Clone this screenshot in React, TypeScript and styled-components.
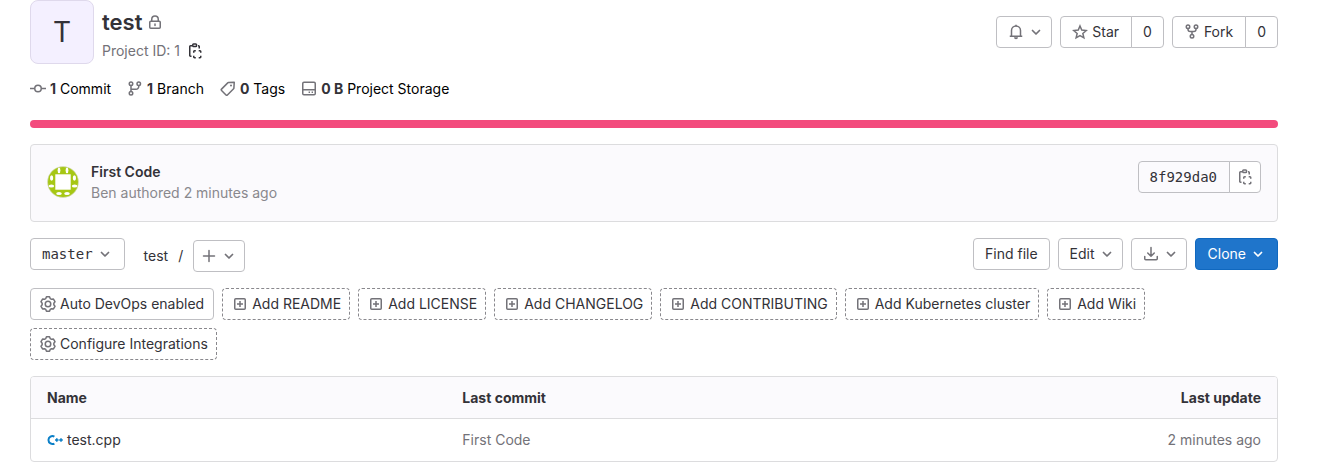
import React from "react";
import styled, { createGlobalStyle, css } from "styled-components";

const GlobalStyle = createGlobalStyle`
  *, *::before, *::after { box-sizing: border-box; }
  body {
    margin: 0;
    background: #fff;
    color: #333238;
    font-family: Inter, "Noto Sans", sans-serif;
    font-size: 14px;
    line-height: 20px;
  }
  a { color: inherit; text-decoration: none; }
  button { font: inherit; color: inherit; cursor: pointer; }
`;

/* ---------- icons ---------- */

const Svg = styled.svg<{ $color?: string }>`
  flex: none;
  display: block;
  width: 16px;
  height: 16px;
  color: ${(p) => p.$color ?? "#737278"};
  fill: none;
  stroke: currentColor;
  stroke-width: 1.5;
`;

const shapes = {
  chevron: <path d="M4.5 6.5 8 10l3.5-3.5" strokeWidth="1.7" strokeLinecap="round" strokeLinejoin="round" />,
  lock: (
    <>
      <path d="M4.75 7.5V5.25a3.25 3.25 0 0 1 6.5 0V7.5" />
      <rect x="2.75" y="7.25" width="10.5" height="7" rx="1" />
      <path d="M8 10v1.5" strokeLinecap="round" />
    </>
  ),
  copy: (
    <>
      <path d="M5 2.75H3.5a.75.75 0 0 0-.75.75v9a.75.75 0 0 0 .75.75h1M11 2.75h.5a.75.75 0 0 1 .75.75v2" />
      <rect x="5.75" y=".95" width="3.8" height="2.6" rx=".8" />
      <path d="M6.75 9.8V8.5a.75.75 0 0 1 .75-.75h1.3M11.7 7.75H13a.75.75 0 0 1 .75.75v1.3M13.75 12.7V14a.75.75 0 0 1-.75.75h-1.3M8.8 14.75H7.5a.75.75 0 0 1-.75-.75v-1.3" />
    </>
  ),
  commit: (
    <>
      <circle cx="8" cy="7.5" r="3.25" />
      <path d="M0 7.5h4.75M11.25 7.5H16" />
    </>
  ),
  branch: (
    <>
      <circle cx="4" cy="2.75" r="1.75" />
      <circle cx="4" cy="12.25" r="1.75" />
      <circle cx="11.75" cy="2.75" r="1.75" />
      <path d="M4 4.5v6M4 8.25H9A2.75 2.75 0 0 0 11.75 5.5v-1" />
    </>
  ),
  fork: (
    <>
      <circle cx="4" cy="2.75" r="1.75" />
      <circle cx="12" cy="2.75" r="1.75" />
      <circle cx="8" cy="12.25" r="1.75" />
      <path d="M4 4.5V5.2A2.25 2.25 0 0 0 6.25 7.45h3.5A2.25 2.25 0 0 0 12 5.2v-.7M8 7.45v3" />
    </>
  ),
  tag: (
    <>
      <path d="M8.4 1.6 14.25 1.25l-.35 5.85a1 1 0 0 1-.3.65l-6.2 6.2a1 1 0 0 1-1.4 0L1.55 9.5a1 1 0 0 1 0-1.4l6.2-6.2a1 1 0 0 1 .65-.3z" strokeLinejoin="round" />
      <circle cx="11" cy="4.6" r="1" fill="currentColor" stroke="none" />
    </>
  ),
  disk: (
    <>
      <rect x="1.75" y="1.25" width="12.5" height="12.5" rx="1.25" />
      <path d="M2 8.75h12" />
      <path d="M7.6 11.25h1.4M10.6 11.25H12" />
    </>
  ),
  bell: (
    <>
      <path d="M3.5 12V6.5a4.5 4.5 0 0 1 9 0V12M1.75 12.25h12.5" />
      <path d="M8 .75v1.5" />
      <path d="M6 13.25a2 2 0 0 0 4 0z" fill="currentColor" stroke="none" />
    </>
  ),
  star: (
    <path d="m8 2 1.75 4.1 4.5.4-3.4 2.95 1 4.35L8 11.5l-3.85 2.3 1-4.35L1.75 6.5l4.5-.4z" />
  ),
  plus: <path d="M8 2.5v11M2.5 8h11" strokeLinecap="round" />,
  plusSquare: (
    <>
      <rect x="2.75" y="2.75" width="10.5" height="10.5" rx="1" />
      <path d="M8 5v6M5 8h6" />
    </>
  ),
  download: (
    <path d="M8 1.5v8.75M4.75 7 8 10.25 11.25 7M1.75 10.5v2.25a1 1 0 0 0 1 1h10.5a1 1 0 0 0 1-1V10.5" strokeLinejoin="round" strokeLinecap="round" />
  ),
  gear: (
    <>
      <path
        d="M6.46.8H9.54L10.21 2.53 11.63 3.35 13.46 3.08 14.99 5.73 13.84 7.18V8.82L14.99 10.27 13.46 12.92 11.63 12.65 10.21 13.47 9.54 15.2H6.46L5.79 13.47 4.37 12.65 2.54 12.92 1.01 10.27 2.16 8.82V7.18L1.01 5.73 2.54 3.08 4.37 3.35 5.79 2.53z"
        strokeLinejoin="round"
      />
      <circle cx="8" cy="8" r="2.75" />
    </>
  ),
};

type IconName = keyof typeof shapes;

const Icon = ({ name, color }: { name: IconName; color?: string }) => (
  <Svg viewBox="0 0 16 16" $color={color} aria-hidden="true">
    {shapes[name]}
  </Svg>
);

const CppIcon = () => (
  <Svg viewBox="0 0 16 16" $color="#0a7fc7" aria-hidden="true">
    <path d="M7.4 4.5A4 4 0 1 0 7.4 11.5" strokeWidth="2" />
    <path d="M8 8h3.6M9.8 6.200v3.600M12.200 8h3.600M14 6.200v3.600" strokeWidth="1.5" />
  </Svg>
);

const IdenticonSvg = styled.svg`
  flex: none;
  display: block;
  width: 32px;
  height: 32px;
`;

const Identicon = () => (
  <IdenticonSvg viewBox="0 0 32 32" role="img" aria-label="Ben">
    <circle cx="16" cy="16" r="15.5" fill="#a6c714" stroke="#dcdcde" strokeWidth=".5" />
    <g fill="#fff">
      <rect x="8.3" y="8.3" width="15.4" height="15.4" />
      <ellipse cx="12" cy="4.4" rx="1.4" ry="2.8" />
      <ellipse cx="20" cy="4.4" rx="1.4" ry="2.8" />
      <ellipse cx="4.6" cy="12" rx="1.6" ry="2.8" />
      <ellipse cx="27.4" cy="12" rx="1.6" ry="2.8" />
      <ellipse cx="4.4" cy="20" rx="2.8" ry="1.5" />
      <ellipse cx="27.6" cy="20" rx="2.8" ry="1.5" />
      <ellipse cx="12" cy="27.6" rx="2.8" ry="1.5" />
      <ellipse cx="20" cy="27.6" rx="2.8" ry="1.5" />
    </g>
  </IdenticonSvg>
);

/* ---------- layout ---------- */

const Page = styled.main`
  padding: 0 40px 12px 30px;
`;

const Header = styled.header`
  display: flex;
  justify-content: space-between;
  align-items: center;
`;

const Project = styled.div`
  display: flex;
  gap: 8px;
`;

const Avatar = styled.div`
  display: grid;
  place-items: center;
  width: 64px;
  height: 64px;
  border: 1px solid #dfd9ec;
  border-radius: 8px;
  background: #f4f0ff;
  font-size: 28px;
  line-height: 32px;
`;

const TitleRow = styled.div`
  display: flex;
  align-items: center;
  gap: 5px;
  padding: 8px 0 5px;
`;

const Title = styled.h1`
  margin: 0;
  font-size: 22px;
  line-height: 28px;
  font-weight: 600;
`;

const ProjectId = styled.div`
  display: flex;
  align-items: center;
  gap: 7px;
  color: #737278;
`;

const IconButton = styled.button`
  padding: 0;
  border: 0;
  background: none;
`;

const Row = styled.div`
  display: flex;
  gap: 8px;
`;

const buttonLook = css`
  display: inline-flex;
  align-items: center;
  gap: 4px;
  height: 32px;
  border: 1px solid #bfbfc3;
  border-radius: 4px;
  background: #fff;
  white-space: nowrap;
`;

const Button = styled.button<{ $primary?: boolean; $mono?: boolean; $pad?: string }>`
  ${buttonLook}
  padding: 0 ${(p) => p.$pad ?? "11px"};
  ${(p) => p.$mono && css`font-family: "DejaVu Sans Mono", monospace;`}
  ${(p) =>
    p.$primary &&
    css`
      padding-left: 12px;
      border-color: #1068bf;
      background: #1f75cb;
      color: #fff;
    `}
`;

const ButtonGroup = styled.div`
  display: flex;

  > * + * {
    margin-left: -1px;
  }
  > :first-child {
    padding-right: 12px;
    border-top-right-radius: 0;
    border-bottom-right-radius: 0;
  }
  > :last-child {
    border-top-left-radius: 0;
    border-bottom-left-radius: 0;
  }
`;

const CountLink = styled.a`
  ${buttonLook}
  padding: 0 11px;
`;

const Sha = styled.span`
  ${buttonLook}
  padding: 0 11px;
  background: transparent;
  font-family: "DejaVu Sans Mono", monospace;
`;

const Stats = styled.nav`
  display: flex;
  gap: 16px;
  padding: 15px 0 21px;
  color: #000;
`;

const Stat = styled.a`
  display: flex;
  align-items: center;
  gap: 4px;

  strong {
    font-weight: 700;
    color: #333238;
  }
`;

const LanguageBar = styled.div`
  height: 8px;
  border-radius: 4px;
  background: #f34b7d;
`;

const CommitCard = styled.section`
  display: flex;
  justify-content: space-between;
  align-items: flex-start;
  margin: 16px 0;
  padding: 16px;
  min-height: 78px;
  border: 1px solid #dcdcde;
  border-radius: 4px;
  background: #fbfafd;
`;

const CommitInfo = styled.div`
  display: flex;
  align-items: center;
  gap: 12px;
  color: #89888d;
  line-height: 21px;
`;

const CommitTitle = styled.a`
  display: block;
  font-weight: 600;
  color: #333238;
`;

const Toolbar = styled.div`
  display: flex;
  justify-content: space-between;
  align-items: flex-start;
`;

const Crumbs = styled.nav`
  display: flex;
  align-items: center;
  gap: 10px;
  padding: 2px 0 0 11px;
`;

const Chips = styled.div`
  display: flex;
  flex-wrap: wrap;
  gap: 8px;
  margin: 16px 0;
`;

const Chip = styled.a<{ $solid?: boolean }>`
  ${buttonLook}
  padding: 0 9px;
  ${(p) =>
    !p.$solid &&
    css`
      padding-right: 8px;
      border: 1px dashed #89888d;
    `}
`;

const TableFrame = styled.div`
  border: 1px solid #dcdcde;
  border-radius: 4px;
  overflow: hidden;
`;

const Table = styled.table`
  width: 100%;
  table-layout: fixed;
  border-collapse: separate;
  border-spacing: 0;

  th,
  td {
    height: 42px;
    padding: 0 16px;
    text-align: left;
  }
  th {
    background: #fbfafd;
    border-bottom: 1px solid #dcdcde;
    font-weight: 700;
  }
  td {
    color: #737278;
  }
  th:last-child,
  td:last-child {
    text-align: right;
  }
`;

const FileLink = styled.a`
  display: flex;
  align-items: center;
  gap: 4px;
  color: #333238;
`;

/* ---------- content ---------- */

const stats: { icon: IconName; value: string; label: string }[] = [
  { icon: "commit", value: "1", label: "Commit" },
  { icon: "branch", value: "1", label: "Branch" },
  { icon: "tag", value: "0", label: "Tags" },
  { icon: "disk", value: "0 B", label: "Project Storage" },
];

const chips: { icon: IconName; label: string; solid?: boolean }[] = [
  { icon: "gear", label: "Auto DevOps enabled", solid: true },
  { icon: "plusSquare", label: "Add README" },
  { icon: "plusSquare", label: "Add LICENSE" },
  { icon: "plusSquare", label: "Add CHANGELOG" },
  { icon: "plusSquare", label: "Add CONTRIBUTING" },
  { icon: "plusSquare", label: "Add Kubernetes cluster" },
  { icon: "plusSquare", label: "Add Wiki" },
  { icon: "gear", label: "Configure Integrations" },
];

export default function App() {
  return (
    <>
      <GlobalStyle />
      <Page>
        <Header>
          <Project>
            <Avatar>T</Avatar>
            <div>
              <TitleRow>
                <Title>test</Title>
                <Icon name="lock" />
              </TitleRow>
              <ProjectId>
                Project ID: 1
                <IconButton aria-label="Copy project ID">
                  <Icon name="copy" color="#333238" />
                </IconButton>
              </ProjectId>
            </div>
          </Project>
          <Row>
            <Button $pad="7px 0 11px" aria-label="Notifications">
              <Icon name="bell" />
              <Icon name="chevron" />
            </Button>
            <ButtonGroup>
              <Button>
                <Icon name="star" />
                Star
              </Button>
              <CountLink href="#stars">0</CountLink>
            </ButtonGroup>
            <ButtonGroup>
              <Button>
                <Icon name="fork" />
                Fork
              </Button>
              <CountLink href="#forks">0</CountLink>
            </ButtonGroup>
          </Row>
        </Header>

        <Stats aria-label="Project statistics">
          {stats.map((s) => (
            <Stat key={s.label} href="#stats">
              <Icon name={s.icon} />
              <span>
                <strong>{s.value}</strong> {s.label}
              </span>
            </Stat>
          ))}
        </Stats>

        <LanguageBar />

        <CommitCard>
          <CommitInfo>
            <Identicon />
            <div>
              <CommitTitle href="#commit">First Code</CommitTitle>
              Ben authored 2 minutes ago
            </div>
          </CommitInfo>
          <ButtonGroup>
            <Sha>8f929da0</Sha>
            <Button $pad="7px" aria-label="Copy commit SHA">
              <Icon name="copy" />
            </Button>
          </ButtonGroup>
        </CommitCard>

        <Toolbar>
          <Row>
            <Button $mono>
              master
              <Icon name="chevron" />
            </Button>
            <Crumbs aria-label="Path">
              <a href="#root">test</a>
              <span>/</span>
              <Button $pad="7px" aria-label="Add to tree">
                <Icon name="plus" />
                <Icon name="chevron" />
              </Button>
            </Crumbs>
          </Row>
          <Row>
            <Button>Find file</Button>
            <Button $pad="7px 0 11px">
              Edit
              <Icon name="chevron" />
            </Button>
            <Button $pad="7px 0 11px" aria-label="Download">
              <Icon name="download" />
              <Icon name="chevron" />
            </Button>
            <Button $primary>
              Clone
              <Icon name="chevron" color="#fff" />
            </Button>
          </Row>
        </Toolbar>

        <Chips>
          {chips.map((c) => (
            <Chip key={c.label} href="#setup" $solid={c.solid}>
              <Icon name={c.icon} />
              {c.label}
            </Chip>
          ))}
        </Chips>

        <TableFrame>
          <Table>
            <thead>
              <tr>
                <th scope="col">Name</th>
                <th scope="col">Last commit</th>
                <th scope="col">Last update</th>
              </tr>
            </thead>
            <tbody>
              <tr>
                <td>
                  <FileLink href="#file">
                    <CppIcon />
                    test.cpp
                  </FileLink>
                </td>
                <td>First Code</td>
                <td>2 minutes ago</td>
              </tr>
            </tbody>
          </Table>
        </TableFrame>
      </Page>
    </>
  );
}
